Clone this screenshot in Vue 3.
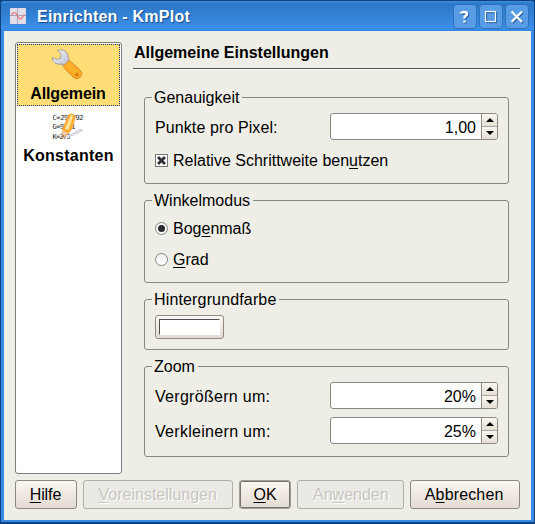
<script setup>
import { ref } from 'vue'

const relative = ref(true)
const angle = ref('rad')
const zooms = [
  { label: 'Vergrößern um:', value: '20%' },
  { label: 'Verkleinern um:', value: '25%' },
]
</script>

<template>
  <div class="window">
    <header class="titlebar">
      <svg class="app-icon" width="16" height="16" viewBox="0 0 16 16">
        <rect width="16" height="16" rx="1" fill="#e2dde8" />
        <path d="M0 7.500H16M7.500 0V16" stroke="#a9a3bc" stroke-width="1" />
        <path d="M1.500 7.500C2.500 3.500 5.500 3.500 7 7S10.500 13 12.500 9L14.500 6.500" fill="none" stroke="#ee6c74" stroke-width="1.100" />
      </svg>
      <h1 class="title">Einrichten - KmPlot</h1>
      <div class="controls">
        <button class="ctl">
          <svg width="24" height="24" viewBox="0 0 24 24"><g fill="none" stroke-width="2.400"><path class="shade" d="M9 9.500V9Q9.500 8 12 8Q15 8 15 10Q15 11.500 13.200 12.200Q12.500 12.800 12.500 14.500M12.500 16.500V18.500" /><path class="glyph" d="M8 8.500V8Q8.500 7 11 7Q14 7 14 9Q14 10.500 12.200 11.200Q11.500 11.800 11.500 13.500M11.500 15.500V17.500" /></g></svg>
        </button>
        <button class="ctl">
          <svg width="24" height="24" viewBox="0 0 24 24"><g fill="none" stroke-width="1.200"><rect class="shade" x="7.500" y="7.500" width="10" height="10" /><rect class="glyph" x="6.500" y="6.500" width="10" height="10" /></g></svg>
        </button>
        <button class="ctl">
          <svg width="24" height="24" viewBox="0 0 24 24"><g fill="none" stroke-width="2.200"><path class="shade" d="M7.500 7.500L18 18M18 7.500L7.500 18" /><path class="glyph" d="M6.500 6.500L17 17M17 6.500L6.500 17" /></g></svg>
        </button>
      </div>
    </header>

    <div class="body">
      <div class="main">
        <nav class="list">
          <div class="item selected">
            <svg width="32" height="32" viewBox="0 0 32 32">
              <defs>
                <linearGradient id="handle" x1="0" y1="1" x2="1" y2="0">
                  <stop offset="0" stop-color="#f08a10" /><stop offset="0.500" stop-color="#ffb52c" /><stop offset="1" stop-color="#f08a18" />
                </linearGradient>
                <linearGradient id="steel" x1="0" y1="0" x2="1" y2="1">
                  <stop offset="0" stop-color="#ffffff" /><stop offset="1" stop-color="#b4b8cc" />
                </linearGradient>
              </defs>
              <path d="M14 20L25 31L30 28L20 16Z" fill="#d8a650" opacity=".4" />
              <path d="M6.500 1.500C12 -.5 17 3 17 8L18.500 12L13.500 16.500L10 15C5 16 1 12.500 1.500 8.500L5 10.500L9.500 9L10 4.500Z" fill="url(#steel)" stroke="#8c8ea2" stroke-width=".8" />
              <path d="M12.500 16Q15.500 15 17.500 11.500Q20 12 21.500 14L29.500 21.500Q32.500 25 29.500 28Q26 31 22.500 28.500L14.500 20.500Q12 18 12.500 16Z" fill="url(#handle)" stroke="#cf7c1c" stroke-width=".7" />
              <circle cx="26" cy="25.500" r="1.600" fill="#e89020" stroke="#c06a08" stroke-width=".7" />
            </svg>
            <span>Allgemein</span>
          </div>
          <div class="item">
            <svg class="formula-icon" width="32" height="32" viewBox="0 0 32 32">
              <g class="formula"><text x="0.500" y="8.500" textLength="31">C=299792</text><text x="0.500" y="17.500" textLength="23">G=9.81</text><text x="0.500" y="27.500" textLength="18">K=273</text></g>
              <path d="M12 27L28 17.500Q31 17 31 20L22 24.500Z" fill="#d9d9e4" />
              <path d="M10 27L10.500 18L16.500 4Q20 1 23.500 5.500L20.500 17L16 23Z" fill="#ffac2d" stroke="#f0a55c" stroke-width=".6" />
              <path d="M13 18L18.500 4.500Q20 3 21 5.500L16.500 19Z" fill="#ffe4a0" />
              <path d="M10 27L10.500 19L16 22Z" fill="#efd0a4" /><path d="M10 27L10.500 23.500L12.500 25Z" fill="#855e45" />
            </svg>
            <span class="konst">Konstanten</span>
          </div>
        </nav>

        <section class="page">
          <h2>Allgemeine Einstellungen</h2>
          <div class="rule"></div>

          <div class="group accuracy">
            <span class="legend">Genauigkeit</span>
            <div class="row">
              <label class="punkte">Punkte pro Pixel:</label>
              <div class="spin">
                <div class="value">1,00</div>
                <div class="steps"><button><i class="up"></i></button><button><i class="down"></i></button></div>
              </div>
            </div>
            <div class="option" @click="relative = !relative">
              <span class="check"><svg v-if="relative" width="11" height="11" viewBox="0 0 11 11"><path d="M2 2L9 9M9 2L2 9" stroke="#2c2e33" stroke-width="2.800" /></svg></span>
              <span class="text">Relative Schrittweite ben<u>u</u>tzen</span>
            </div>
          </div>

          <div class="group mode">
            <span class="legend">Winkelmodus</span>
            <div class="option" @click="angle = 'rad'"><span class="radio" :class="{ on: angle === 'rad' }"></span><span class="text">Bog<u>e</u>nmaß</span></div>
            <div class="option" @click="angle = 'deg'"><span class="radio" :class="{ on: angle === 'deg' }"></span><span class="text"><u>G</u>rad</span></div>
          </div>

          <div class="group colour">
            <span class="legend hinter">Hintergrundfarbe</span>
            <button class="swatch"><span></span></button>
          </div>

          <div class="group zoom">
            <span class="legend">Zoom</span>
            <div v-for="z in zooms" :key="z.label" class="row">
              <label class="zlabel">{{ z.label }}</label>
              <div class="spin">
                <div class="value">{{ z.value }}</div>
                <div class="steps"><button><i class="up"></i></button><button><i class="down"></i></button></div>
              </div>
            </div>
          </div>
        </section>
      </div>

      <footer class="buttons">
        <button class="btn help"><span><u>H</u>ilfe</span></button>
        <button class="btn defaults" disabled><span><u>V</u>oreinstellungen</span></button>
        <button class="btn ok"><span><u>O</u>K</span></button>
        <button class="btn apply" disabled><span>An<u>w</u>enden</span></button>
        <button class="btn cancel"><span>A<u>b</u>brechen</span></button>
      </footer>
    </div>
  </div>
</template>

<style>
body { margin: 0; background: #0b417f; }
</style>

<style scoped>
* { box-sizing: border-box; }
button { font: inherit; padding: 0; margin: 0; color: inherit; }
u { text-decoration: underline; text-decoration-thickness: 1px; text-underline-offset: 2px; text-decoration-skip-ink: none; }
.window { width: 535px; height: 524px; border: 1px solid #0e4280; border-width: 1px 1px 2px 1px; border-radius: 4px 4px 0 0; background: #378be5; display: flex; flex-direction: column; padding: 0 3px 2px; font: 16px/20px "Liberation Sans", Arial, sans-serif; color: #000; white-space: nowrap; overflow: hidden; }
.titlebar { height: 30px; flex: none; display: flex; align-items: center; margin: 0 -3px; padding: 1px 5px 0 9px; background: linear-gradient(#3d8edf 0, #2b77c6 3px, #3c8ee8 28px, #2f82da 30px); }
.app-icon { flex: none; margin-top: -1px; }
.title { margin: 0 0 0 11px; padding-top: 1px; font-size: 16px; line-height: 20px; font-weight: 700; letter-spacing: .24px; color: #fff; text-shadow: 1px 1px 1px #174d8b; }
.controls { margin-left: auto; display: flex; gap: 2px; }
.ctl { width: 24px; height: 25px; border: 1px solid #2d72bd; border-radius: 4px; background: #589ce6; display: flex; align-items: center; justify-content: center; }
.ctl svg { flex: none; }
.shade { stroke: #275f9e; }
.glyph { stroke: #fff; }
.body { flex: 1; background: #eeeee6; padding: 11px 11px 0; display: flex; flex-direction: column; }
.main { display: flex; height: 432px; }
.list { width: 107px; height: 432px; flex: none; border: 1px solid #7d7d7a; border-radius: 3px; padding: 1px; background: #fff; font-weight: 700; }
.item { height: 62px; display: flex; flex-direction: column; align-items: center; padding-top: 4px; border: 1px solid transparent; line-height: 20px; }
.item svg { flex: none; display: block; margin: 0 4px 3px 0; }
.item .formula-icon { margin-right: 1px; }
.item > span { margin-right: 1px; letter-spacing: -.1px; }
.item > .konst { margin-right: 0; letter-spacing: .25px; }
.selected { background: #ffdd76; border: 1px dotted #273578; }
.formula { font: 7px "DejaVu Sans Mono", monospace; fill: #222; }
.page { flex: 1; padding-left: 11px; }
h2 { margin: 0; font-size: 16px; font-weight: 700; line-height: 20px; padding: 1px 0 0 1px; }
.rule { margin: 5px 0 28px; height: 1px; width: 387px; background: #555; box-shadow: 0 1px #f9f9f6; }
.group { position: relative; margin-left: 11px; width: 365px; border: 1px solid #858983; border-radius: 3px; padding: 15px 10px 0; }
.legend { position: absolute; top: -10px; left: 7px; padding: 0 3px 0 2px; background: #eeeee6; line-height: 20px; }
.hinter { letter-spacing: .15px; }
.row { display: flex; justify-content: space-between; align-items: center; }
.row label { padding-top: 2px; }
.punkte { letter-spacing: .1px; }
.zlabel { letter-spacing: .3px; }
.accuracy { height: 87px; }
.mode { height: 83px; margin-top: 16px; }
.colour { height: 51px; margin-top: 16px; }
.zoom { height: 91px; margin-top: 16px; }
.zoom .row + .row { margin-top: 8px; }
.spin { width: 168px; height: 27px; border: 1px solid #8a8882; border-radius: 3px; display: flex; background: #fff; overflow: hidden; }
.value { flex: 1; text-align: right; padding-right: 5px; line-height: 28px; }
.steps { width: 16px; border-left: 1px solid #8e8b84; display: flex; flex-direction: column; }
.steps button { flex: 1; min-height: 0; border: 0; background: linear-gradient(#fbf6f1, #e7dfd5); display: flex; align-items: center; justify-content: center; }
.steps button + button { border-top: 1px solid #aaa69f; }
i { display: block; border: 4px solid transparent; border-top-width: 0; border-bottom: 4px solid #000; }
.down { transform: rotate(180deg); }
.option { display: flex; align-items: center; gap: 5px; height: 20px; }
.text { padding-top: 2px; }
.accuracy .option { margin-top: 10px; }
.check { width: 13px; height: 13px; border: 1px solid #777; background: #fff; display: flex; }
.radio { width: 13px; height: 13px; border: 1px solid #888681; border-radius: 50%; background: linear-gradient(#eee, #fff); display: flex; align-items: center; justify-content: center; }
.on::after { content: ""; width: 7px; height: 7px; border-radius: 50%; background: #2b2d2e; }
.mode { padding-top: 17px; }
.mode .option + .option { margin-top: 11px; }
.swatch { width: 69px; height: 24px; border: 1px solid #8f8a82; border-radius: 3px; background: linear-gradient(#fbf7f2, #e3dbd1); padding: 3px; display: block; }
.swatch span { display: block; width: 61px; height: 16px; background: #fff; border: 1px solid; border-color: #4e4e4e #fff #fff #4e4e4e; }
.buttons { display: flex; gap: 6px; margin-top: 6px; }
.btn { height: 29px; border: 1px solid #8c8881; border-radius: 3px; background: linear-gradient(#faf6f1, #e3dbd1); display: flex; align-items: center; justify-content: center; }
.btn:disabled { border-color: #aeb0a8; color: #c6c6c1; background: #ebe9e3; text-shadow: 1px 1px #fff; }
.help { width: 62px; padding-right: 1px; letter-spacing: -.1px; }
.defaults { width: 150px; }
.ok { width: 53px; border-color: #a09d96; box-shadow: inset 0 0 0 1px #77746f; }
.apply { width: 107px; }
.cancel { width: 110px; padding-right: 2px; letter-spacing: .15px; }
</style>
